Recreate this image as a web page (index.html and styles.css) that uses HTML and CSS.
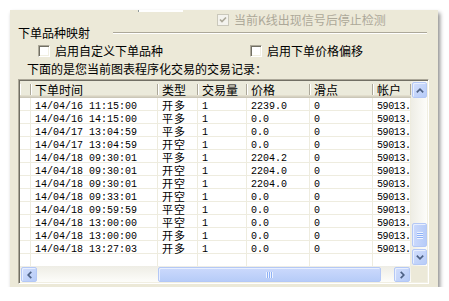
FILE: index.html
```html
<!DOCTYPE html>
<html lang="zh-CN">
<head>
  <meta charset="UTF-8" />
  <title>交易记录</title>
  <link rel="stylesheet" href="styles.css">
</head>
<body>
  <div class="panel">
    <div class="tab-edge"></div>

    <div class="opt-row">
      <label class="check disabled">
        <span class="box">
          <svg width="10" height="10" viewBox="0 0 10 10"><polyline points="2,4.5 4,6.5 8,2.5" fill="none" stroke="#aca899" stroke-width="1.7"/></svg>
        </span>当前K线出现信号后停止检测
      </label>
    </div>

    <div class="group-title">
      <span>下单品种映射</span>
      <span class="rule"></span>
    </div>

    <div class="check-row">
      <label class="check"><span class="box"></span>启用自定义下单品种</label>
      <label class="check offset"><span class="box"></span>启用下单价格偏移</label>
    </div>

    <div class="note">下面的是您当前图表程序化交易的交易记录：</div>

    <div class="list">
      <div class="list-body">
        <div class="row head">
          <div></div>
          <div>下单时间</div>
          <div>类型</div>
          <div>交易量</div>
          <div>价格</div>
          <div>滑点</div>
          <div>帐户</div>
        </div>
        <div class="rows" id="rows"></div>
      </div>

      <div class="vscroll">
        <div class="sbtn up">
          <svg width="8" height="5" viewBox="0 0 8 5"><polyline points="0.8,4.3 4,1.2 7.2,4.3" fill="none" stroke="#4d6185" stroke-width="1.7"/></svg>
        </div>
        <div class="track-space"></div>
        <div class="thumb v"></div>
        <div class="sbtn down">
          <svg width="8" height="5" viewBox="0 0 8 5"><polyline points="0.8,0.7 4,3.8 7.2,0.7" fill="none" stroke="#4d6185" stroke-width="1.7"/></svg>
        </div>
      </div>

      <div class="hscroll">
        <div class="sbtn left">
          <svg width="5" height="8" viewBox="0 0 5 8"><polyline points="4.3,0.8 1.2,4 4.3,7.2" fill="none" stroke="#4d6185" stroke-width="1.7"/></svg>
        </div>
        <div class="track-before"></div>
        <div class="thumb h"></div>
        <div class="track-space"></div>
        <div class="sbtn right">
          <svg width="5" height="8" viewBox="0 0 5 8"><polyline points="0.7,0.8 3.8,4 0.7,7.2" fill="none" stroke="#4d6185" stroke-width="1.7"/></svg>
        </div>
      </div>

      <div class="corner"></div>
    </div>
  </div>

  <script>
    const records = [
      ['14/04/16 11:15:00', '开多', '1', '2239.0', '0', '59013.'],
      ['14/04/16 14:15:00', '平多', '1', '0.0', '0', '59013.'],
      ['14/04/17 13:04:59', '平多', '1', '0.0', '0', '59013.'],
      ['14/04/17 13:04:59', '开空', '1', '0.0', '0', '59013.'],
      ['14/04/18 09:30:01', '平多', '1', '2204.2', '0', '59013.'],
      ['14/04/18 09:30:01', '开空', '1', '2204.0', '0', '59013.'],
      ['14/04/18 09:30:01', '开空', '1', '2204.0', '0', '59013.'],
      ['14/04/18 09:33:01', '开空', '1', '0.0', '0', '59013.'],
      ['14/04/18 09:59:59', '平空', '1', '0.0', '0', '59013.'],
      ['14/04/18 13:00:00', '平空', '1', '0.0', '0', '59013.'],
      ['14/04/18 13:00:00', '开多', '1', '0.0', '0', '59013.'],
      ['14/04/18 13:27:03', '开多', '1', '0.0', '0', '59013.']
    ];

    const rowsDiv = document.getElementById('rows');
    rowsDiv.innerHTML = records
      .map(
        ([time, type, qty, price, slip, account]) => `
        <div class="row item">
          <div></div>
          <div class="num">${time}</div>
          <div class="type">${type}</div>
          <div class="num">${qty}</div>
          <div class="num">${price}</div>
          <div class="num">${slip}</div>
          <div class="num account">${account}</div>
        </div>`
      )
      .join('') +
      '<div class="row filler"><div></div><div></div><div></div><div></div><div></div><div></div><div></div></div>';
  </script>
</body>
</html>
```

FILE: styles.css
```css
* {
  box-sizing: border-box;
  margin: 0;
  padding: 0;
}

body {
  font-family: "Noto Sans CJK SC", "Noto Sans", sans-serif;
  font-size: 12px;
  color: #000;
  background-color: #fff;
}

.panel {
  position: relative;
  width: 428px;
  height: 277px;
  margin: 10px 0 0 10px;
  padding: 3px 9px 3px 8px;
  display: flex;
  flex-direction: column;
  background-color: #ece9d8;
  box-shadow: 2px 3px 4px rgba(0, 0, 0, 0.45);
}

/* bottom edge of the selected tab above */
.tab-edge {
  position: absolute;
  left: 128px;
  top: 0;
  width: 45px;
  height: 2px;
  background-color: #fff;
  border-left: 1px solid #919b9c;
}

.check {
  display: flex;
  align-items: center;
  line-height: 12px;
  white-space: nowrap;
}

.box {
  flex: none;
  width: 12px;
  height: 12px;
  margin-right: 5px;
  background-color: #fff;
  border: 1px solid;
  border-color: #aca899 #fff #fff #aca899;
  box-shadow: inset 1px 1px 0 #716f64, inset -1px -1px 0 #f1efe2;
}

.disabled {
  color: #aca899;
}

.disabled .box {
  display: flex;
  align-items: center;
  justify-content: center;
  background-color: #f4f3ee;
  border-color: #cac8bb;
  box-shadow: none;
}

.opt-row {
  height: 13px;
  display: flex;
  align-items: center;
  padding-left: 199px;
}

.group-title {
  height: 13px;
  display: flex;
  align-items: center;
  line-height: 12px;
}

.group-title .rule {
  flex: 1;
  height: 0;
  margin: 0 2px 0 23px;
  border-top: 1px solid #aca899;
  border-bottom: 1px solid #fff;
}

.check-row {
  height: 13px;
  margin-top: 5px;
  display: flex;
  align-items: center;
  padding-left: 20px;
}

.check.offset {
  margin-left: 87px;
}

.note {
  height: 13px;
  margin-top: 5px;
  padding-left: 9px;
  line-height: 13px;
}

/* list view */
.list {
  width: 411px;
  height: 205px;
  margin-top: 4px;
  display: grid;
  grid-template-columns: 391px 16px;
  grid-template-rows: 185px 16px;
  background-color: #fff;
  border: 1px solid;
  border-color: #aca899 #fff #fff #aca899;
  box-shadow: inset 1px 1px 0 #716f64, inset -1px -1px 0 #f1efe2;
  padding: 1px;
}

.list-body {
  display: flex;
  flex-direction: column;
  overflow: hidden;
}

.row {
  display: grid;
  grid-template-columns: 11px 127px 40px 49px 63px 63px 38px;
}

.row > div {
  padding-left: 4px;
  white-space: nowrap;
}

.head {
  height: 17px;
  line-height: 17px;
  background-color: #ebeadb;
  box-shadow: inset 0 -1px 0 #cbc7b8, inset 0 -2px 0 #d6d2c2, inset 0 -3px 0 #e2decd;
}

.head > div {
  background-image: linear-gradient(#aca899, #aca899), linear-gradient(#fff, #fff);
  background-repeat: no-repeat;
  background-size: 1px 11px, 1px 11px;
  background-position: right 3px, left 3px;
}

.rows {
  flex: 1;
  display: flex;
  flex-direction: column;
}

.item {
  height: 13px;
  grid-template-rows: 12px;
  line-height: 18px;
  border-bottom: 1px solid #eeecdf;
}

.item > div,
.filler > div {
  border-right: 1px solid #eeecdf;
}

.filler {
  flex: 1;
}

.num {
  font-family: "Liberation Mono", monospace;
  font-size: 10px;
}

.account {
  letter-spacing: -0.4px;
}

.type {
  font-family: "Liberation Mono", "Noto Sans CJK SC", monospace;
  font-size: 11px;
  letter-spacing: 1px;
}

/* scroll bars */
.vscroll,
.hscroll {
  display: flex;
}

.vscroll {
  flex-direction: column;
  background: linear-gradient(to right, #eeede5, #fdfdfa);
}

.hscroll {
  background: linear-gradient(#eeede5, #fdfdfa);
}

.track-space {
  flex: 1;
}

.track-before {
  width: 121px;
}

.sbtn,
.thumb {
  display: flex;
  align-items: center;
  justify-content: center;
  border: 1px solid #b4c8f6;
  border-radius: 2px;
  background: linear-gradient(135deg, #d2defc, #b7ccf8);
  box-shadow: inset 1px 1px 0 #e8effe;
}

.vscroll .sbtn {
  width: 15px;
  height: 16px;
  margin-left: 1px;
}

.up {
  margin-top: 1px;
}

.down {
  margin-bottom: 1px;
}

.hscroll .sbtn {
  width: 16px;
  height: 15px;
  margin-top: 1px;
}

.left {
  margin-left: 1px;
}

.right {
  margin-right: 1px;
}

.thumb.v {
  width: 15px;
  height: 24px;
  margin: 0 0 2px 1px;
  background: repeating-linear-gradient(to bottom, #eef3fe 0 1px, #8eb1f6 1px 2px) center / 6px 7px no-repeat,
    linear-gradient(to right, #cbd9fc, #b7ccf8);
}

.thumb.h {
  width: 223px;
  height: 15px;
  margin-top: 1px;
  background: repeating-linear-gradient(to right, #eef3fe 0 1px, #8eb1f6 1px 2px) center / 7px 6px no-repeat,
    linear-gradient(#cbd9fc, #b7ccf8);
}

.corner {
  background-color: #ece9d8;
}
```
